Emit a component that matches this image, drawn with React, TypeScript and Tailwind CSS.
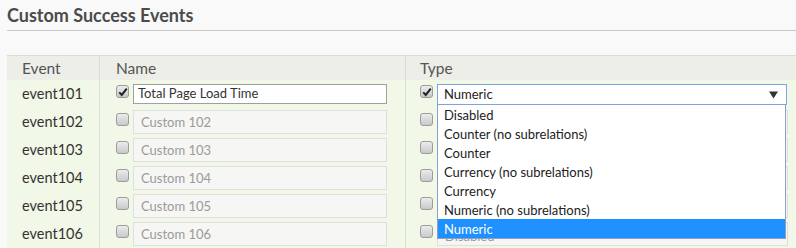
import { useState } from "react";

const rows = [101, 102, 103, 104, 105, 106];

const typeOptions = [
  "Disabled",
  "Counter (no subrelations)",
  "Counter",
  "Currency (no subrelations)",
  "Currency",
  "Numeric (no subrelations)",
  "Numeric",
];

function Checkbox({ checked }: { checked?: boolean }) {
  return (
    <span className="mt-px flex h-[13px] w-[13px] shrink-0 items-center justify-center rounded-[3px] border border-[#9c9c9c] bg-gradient-to-b from-[#ececec] to-[#c9c9c9]">
      {checked && (
        <svg viewBox="0 0 12 12" className="h-[10px] w-[10px]">
          <path d="M1.5 6.5 L4.5 9.5 L10.5 2" fill="none" stroke="#222" strokeWidth="2.4" />
        </svg>
      )}
    </span>
  );
}

export default function App() {
  const [selected] = useState("Numeric");

  return (
    <div className="min-h-[248px] bg-[#f9f9f9] pt-[5px] pl-[7px] font-['Lato',sans-serif] text-[#333]">
      <h1 className="border-b border-[#c8c8c8] pb-[4px] text-[18px] font-bold leading-[21px] text-[#4b4b4b]">
        Custom Success Events
      </h1>

      <div className="mt-[24px] border-t border-[#dcdcdc]">
        <div className="grid grid-cols-[92px_306px_1fr] bg-[#eeeee9] text-[15.5px] leading-[24px] text-[#555]">
          <div className="pl-[15px]">Event</div>
          <div className="border-l border-[#dadad5] pl-[16px]">Name</div>
          <div className="border-l border-[#dadad5] pl-[14px]">Type</div>
        </div>

        {rows.map((n, i) => (
          <div
            key={n}
            className="grid h-[28px] grid-cols-[92px_306px_1fr] bg-[#f2f8e7] text-[14.5px]"
          >
            <div className="flex items-center pl-[15px] leading-[28px]">event{n}</div>
            <div className="flex items-start gap-[4px] border-l border-[#dcdfd5] pt-[4px] pl-[16px]">
              <Checkbox checked={i === 0} />
              {i === 0 ? (
                <div className="flex h-[20px] w-[254px] items-center border border-[#a0a0a0] bg-white pl-[4px] text-[13px]">
                  Total Page Load Time
                </div>
              ) : (
                <div className="-mt-[2px] flex h-[24px] w-[254px] items-center border border-[#dedede] bg-[#f6f6f4] pl-[7px] pt-px text-[13px] text-[#9a9a9a]">
                  Custom {n}
                </div>
              )}
            </div>
            <div className="relative flex items-start gap-[4px] border-l border-[#dcdfd5] pt-[4px] pl-[14px]">
              <Checkbox checked={i === 0} />
              {i === 0 ? (
                <div className="relative z-10 w-[350px]">
                  <div className="flex h-[21px] items-center justify-between border border-[#7ea3e3] bg-white pr-[8px] pl-[6px] pt-px text-[13px] text-[#222]">
                    <span>{selected}</span>
                    <svg viewBox="0 0 10 8" className="h-[8px] w-[9px]">
                      <path d="M0 0 H10 L5 8 Z" fill="#333" />
                    </svg>
                  </div>
                  <ul className="absolute top-[21px] left-0 w-[349px] border border-t-0 border-[#8aa0c8] bg-white text-[13px] text-[#222]">
                    {typeOptions.map((opt) => (
                      <li
                        key={opt}
                        className={
                          opt === selected
                            ? "h-[19px] bg-[#1e90ff] pt-[2px] pl-[6px] leading-[17px] text-white"
                            : "h-[19px] pt-[2px] pl-[6px] leading-[17px]"
                        }
                      >
                        {opt}
                      </li>
                    ))}
                  </ul>
                </div>
              ) : (
                <div className="-mt-[2px] flex h-[24px] w-[351px] items-center border border-[#dedede] bg-[#f6f6f4] pl-[7px] pt-[5px] text-[13px] text-[#9a9a9a]">
                  {n === 106 ? "Disabled" : ""}
                </div>
              )}
            </div>
          </div>
        ))}
      </div>
    </div>
  );
}
